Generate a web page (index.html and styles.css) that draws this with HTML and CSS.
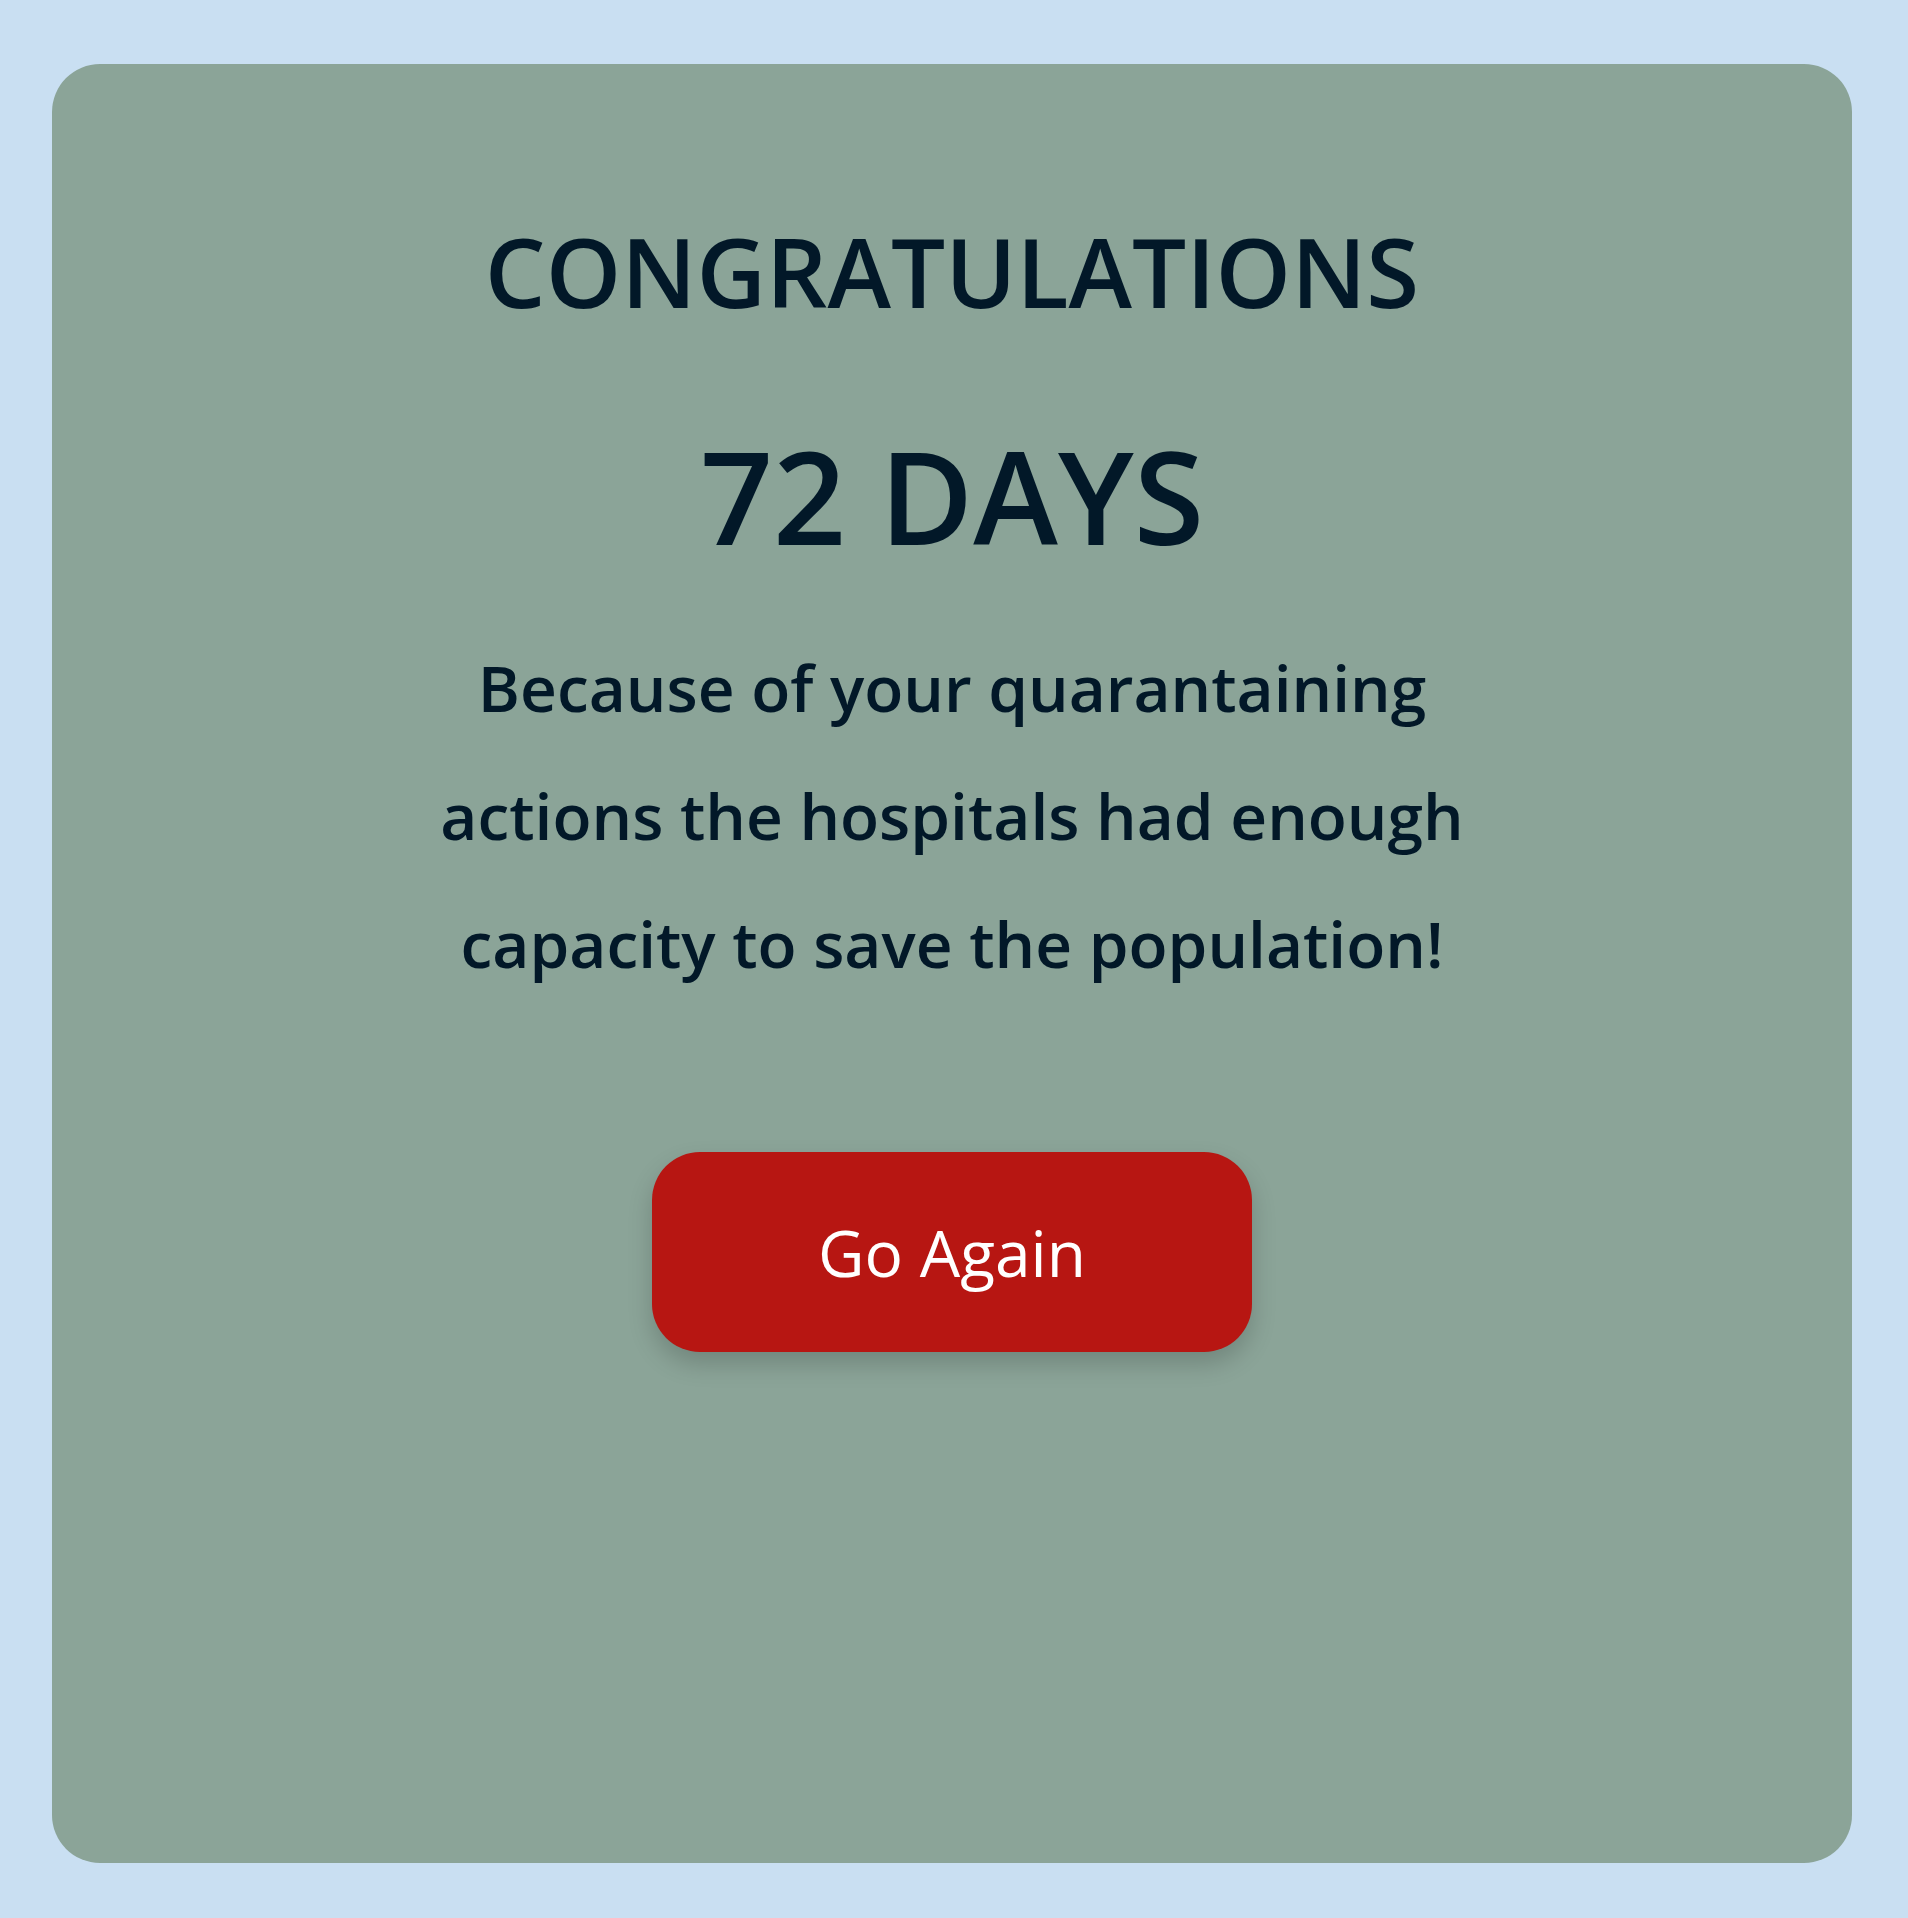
FILE: index.html
```html
<!DOCTYPE html>
<html lang="en">
<head>
<meta charset="utf-8">
<title>Congratulations</title>
<link rel="stylesheet" href="styles.css">
</head>
<body>
<main class="page">
  <section class="card">
    <h1 class="title">CONGRATULATIONS</h1>
    <h2 class="days">72 DAYS</h2>
    <p class="message">Because of your quarantaining actions the hospitals had enough capacity to save the population!</p>
    <button class="again" type="button">Go Again</button>
  </section>
</main>
</body>
</html>
```

FILE: styles.css
```css
html, body {
  margin: 0;
  padding: 0;
  background: #c9dff2;
}

body {
  font-family: "Open Sans", "Noto Sans", sans-serif;
  color: #021828;
}

.page {
  padding: 64px 56px 55px 52px;
}

.card {
  box-sizing: border-box;
  width: 1800px;
  height: 1799px;
  background: #8ba498;
  border-radius: 48px;
  display: flex;
  flex-direction: column;
  align-items: center;
  padding-top: 141px;
}

.title {
  margin: 0;
  font-size: 96px;
  font-weight: 600;
  line-height: normal;
}

.days {
  margin: 72px 0 0;
  font-size: 128px;
  font-weight: 600;
  line-height: normal;
}

.message {
  margin: 41px 0 0;
  max-width: 1080px;
  font-size: 64px;
  font-weight: 600;
  line-height: 128px;
  text-align: center;
}

.again {
  margin-top: 144px;
  width: 600px;
  height: 200px;
  border: none;
  border-radius: 48px;
  background: #b71612;
  color: #ffffff;
  font-family: "Open Sans", "Noto Sans", sans-serif;
  font-size: 64px;
  font-weight: 400;
  box-shadow: 0 12px 24px rgba(0, 0, 0, 0.18);
  cursor: pointer;
}
```
